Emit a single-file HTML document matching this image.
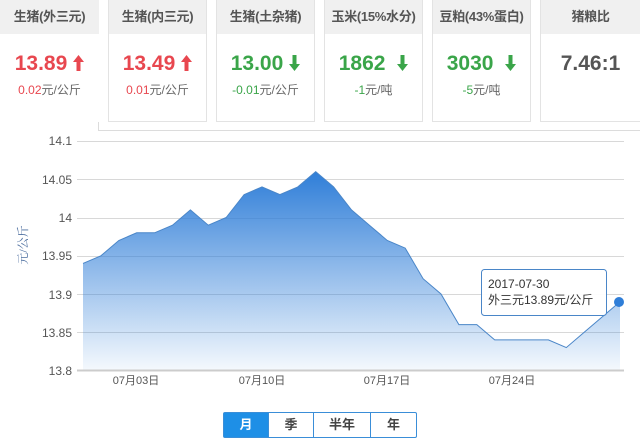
<!DOCTYPE html>
<html><head><meta charset="utf-8"><style>
body{margin:0;width:640px;height:444px;background:#fff;position:relative;overflow:hidden;font-family:"Liberation Sans","Noto Sans CJK SC",sans-serif}
.outer{position:absolute;left:98px;top:-2px;width:542px;height:133px;border:1px solid #dcdcdc;border-right:none;box-sizing:border-box}
.card{position:absolute;top:0;height:122px;width:99px;border:1px solid #e3e3e3;border-top:none;box-sizing:border-box;background:#fff;text-align:center}
.card .h{height:34px;background:#f0f0f0;font-size:13px;font-weight:bold;color:#555;line-height:34px;white-space:nowrap;letter-spacing:-0.3px}
.card .v{font-size:21px;font-weight:bold;margin-top:18px;line-height:24px}
.card .s{font-size:12px;margin-top:5px;color:#666}
.r{color:#e8474f}.g{color:#3aa549}
.ar{display:inline-block;margin-left:6px;vertical-align:-1px}
.tb{position:absolute;top:412px;left:223px;width:194px;height:26px;border:1px solid #3a8ed8;box-sizing:border-box;border-radius:2px;display:flex;font-size:13px;font-weight:bold;color:#444}
.tb div{text-align:center;line-height:24px;border-right:1px solid #3a8ed8}
.tb div:last-child{border-right:none}
</style></head><body>
<div class="outer"></div>
<div class="card" style="left:0;border:none"><div class="h">生猪(外三元)</div><div class="v r">13.89<svg class="ar" width="11" height="16" viewBox="0 0 11 16"><path d="M5.5 0 L11 7 L7.5 7 L7.5 16 L3.5 16 L3.5 7 L0 7Z" fill="#e8474f"/></svg></div><div class="s"><span class="r">0.02</span>元/公斤</div></div>
<div class="card" style="left:108px"><div class="h">生猪(内三元)</div><div class="v r">13.49<svg class="ar" width="11" height="16" viewBox="0 0 11 16"><path d="M5.5 0 L11 7 L7.5 7 L7.5 16 L3.5 16 L3.5 7 L0 7Z" fill="#e8474f"/></svg></div><div class="s"><span class="r">0.01</span>元/公斤</div></div>
<div class="card" style="left:216px"><div class="h">生猪(土杂猪)</div><div class="v g">13.00<svg class="ar" width="11" height="16" viewBox="0 0 11 16"><path d="M5.5 16 L11 9 L7.5 9 L7.5 0 L3.5 0 L3.5 9 L0 9Z" fill="#3aa549"/></svg></div><div class="s"><span class="g">-0.01</span>元/公斤</div></div>
<div class="card" style="left:324px"><div class="h">玉米(15%水分)</div><div class="v g">1862 <svg class="ar" width="11" height="16" viewBox="0 0 11 16"><path d="M5.5 16 L11 9 L7.5 9 L7.5 0 L3.5 0 L3.5 9 L0 9Z" fill="#3aa549"/></svg></div><div class="s"><span class="g">-1</span>元/吨</div></div>
<div class="card" style="left:432px"><div class="h">豆粕(43%蛋白)</div><div class="v g">3030 <svg class="ar" width="11" height="16" viewBox="0 0 11 16"><path d="M5.5 16 L11 9 L7.5 9 L7.5 0 L3.5 0 L3.5 9 L0 9Z" fill="#3aa549"/></svg></div><div class="s"><span class="g">-5</span>元/吨</div></div>
<div class="card" style="left:540px;width:100px;border-right:none"><div class="h">猪粮比</div><div class="v" style="color:#555">7.46:1</div></div>
<svg style="position:absolute;left:0;top:0" width="640" height="444">
<defs><linearGradient id="gr" x1="0" y1="0" x2="0" y2="1"><stop offset="0" stop-color="#2f7ed8"/><stop offset="1" stop-color="#2f7ed8" stop-opacity="0.05"/></linearGradient></defs>
<g stroke="#d8d8d8" stroke-width="1">
<line x1="77" x2="624" y1="141.5" y2="141.5"/><line x1="77" x2="624" y1="179.5" y2="179.5"/><line x1="77" x2="624" y1="218.5" y2="218.5"/><line x1="77" x2="624" y1="256.5" y2="256.5"/><line x1="77" x2="624" y1="294.5" y2="294.5"/><line x1="77" x2="624" y1="332.5" y2="332.5"/></g>
<polygon fill="url(#gr)" points="83,370 83,263.4 100.9,255.8 118.8,240.5 136.7,232.8 154.6,232.8 172.5,225.2 190.4,209.9 208.3,225.2 226.2,217.5 244.1,194.6 262,186.9 279.9,194.6 297.8,186.9 315.7,171.6 333.6,186.9 351.5,209.9 369.4,225.2 387.3,240.5 405.2,248.1 423.1,278.7 441,294 458.9,324.6 476.8,324.6 494.7,339.9 512.6,339.9 530.5,339.9 548.4,339.9 566.3,347.6 584.2,332.3 602.1,317 620,301.7 620,370"/>
<polyline fill="none" stroke="#4a86c8" stroke-width="1" points="83,263.4 100.9,255.8 118.8,240.5 136.7,232.8 154.6,232.8 172.5,225.2 190.4,209.9 208.3,225.2 226.2,217.5 244.1,194.6 262,186.9 279.9,194.6 297.8,186.9 315.7,171.6 333.6,186.9 351.5,209.9 369.4,225.2 387.3,240.5 405.2,248.1 423.1,278.7 441,294 458.9,324.6 476.8,324.6 494.7,339.9 512.6,339.9 530.5,339.9 548.4,339.9 566.3,347.6 584.2,332.3 602.1,317 620,301.7"/>
<line x1="77" x2="624" y1="370.5" y2="370.5" stroke="#ccc" stroke-width="2"/>
<circle cx="619" cy="302" r="5" fill="#2f7ed8"/>
<g font-size="12" fill="#555" text-anchor="end" font-family="Liberation Sans,sans-serif">
<text x="72" y="145">14.1</text><text x="72" y="184">14.05</text><text x="72" y="222">14</text><text x="72" y="260">13.95</text><text x="72" y="299">13.9</text><text x="72" y="337">13.85</text><text x="72" y="375">13.8</text></g>
<g font-size="11" fill="#555" text-anchor="middle" font-family="Liberation Sans,Noto Sans CJK SC,sans-serif">
<text x="136" y="384">07月03日</text><text x="262" y="384">07月10日</text><text x="387" y="384">07月17日</text><text x="512" y="384">07月24日</text></g>
<text transform="translate(27,245) rotate(-90)" text-anchor="middle" font-size="12" fill="#4d6fa0" font-family="Liberation Serif,Noto Serif CJK SC,serif">元/公斤</text>
<rect x="481.5" y="269.5" width="125" height="46" rx="3" fill="#fff" fill-opacity="0.95" stroke="#4a86c8"/>
<text x="488" y="288" font-size="12" fill="#333" font-family="Liberation Sans,Noto Sans CJK SC,sans-serif">2017-07-30</text>
<text x="488" y="304" font-size="12" fill="#333" font-family="Liberation Sans,Noto Sans CJK SC,sans-serif">外三元13.89元/公斤</text>
</svg>
<div class="tb"><div style="width:44px;background:#1e8fe6;color:#fff">月</div><div style="width:44px">季</div><div style="width:56px">半年</div><div style="flex:1">年</div></div>
</body></html>
